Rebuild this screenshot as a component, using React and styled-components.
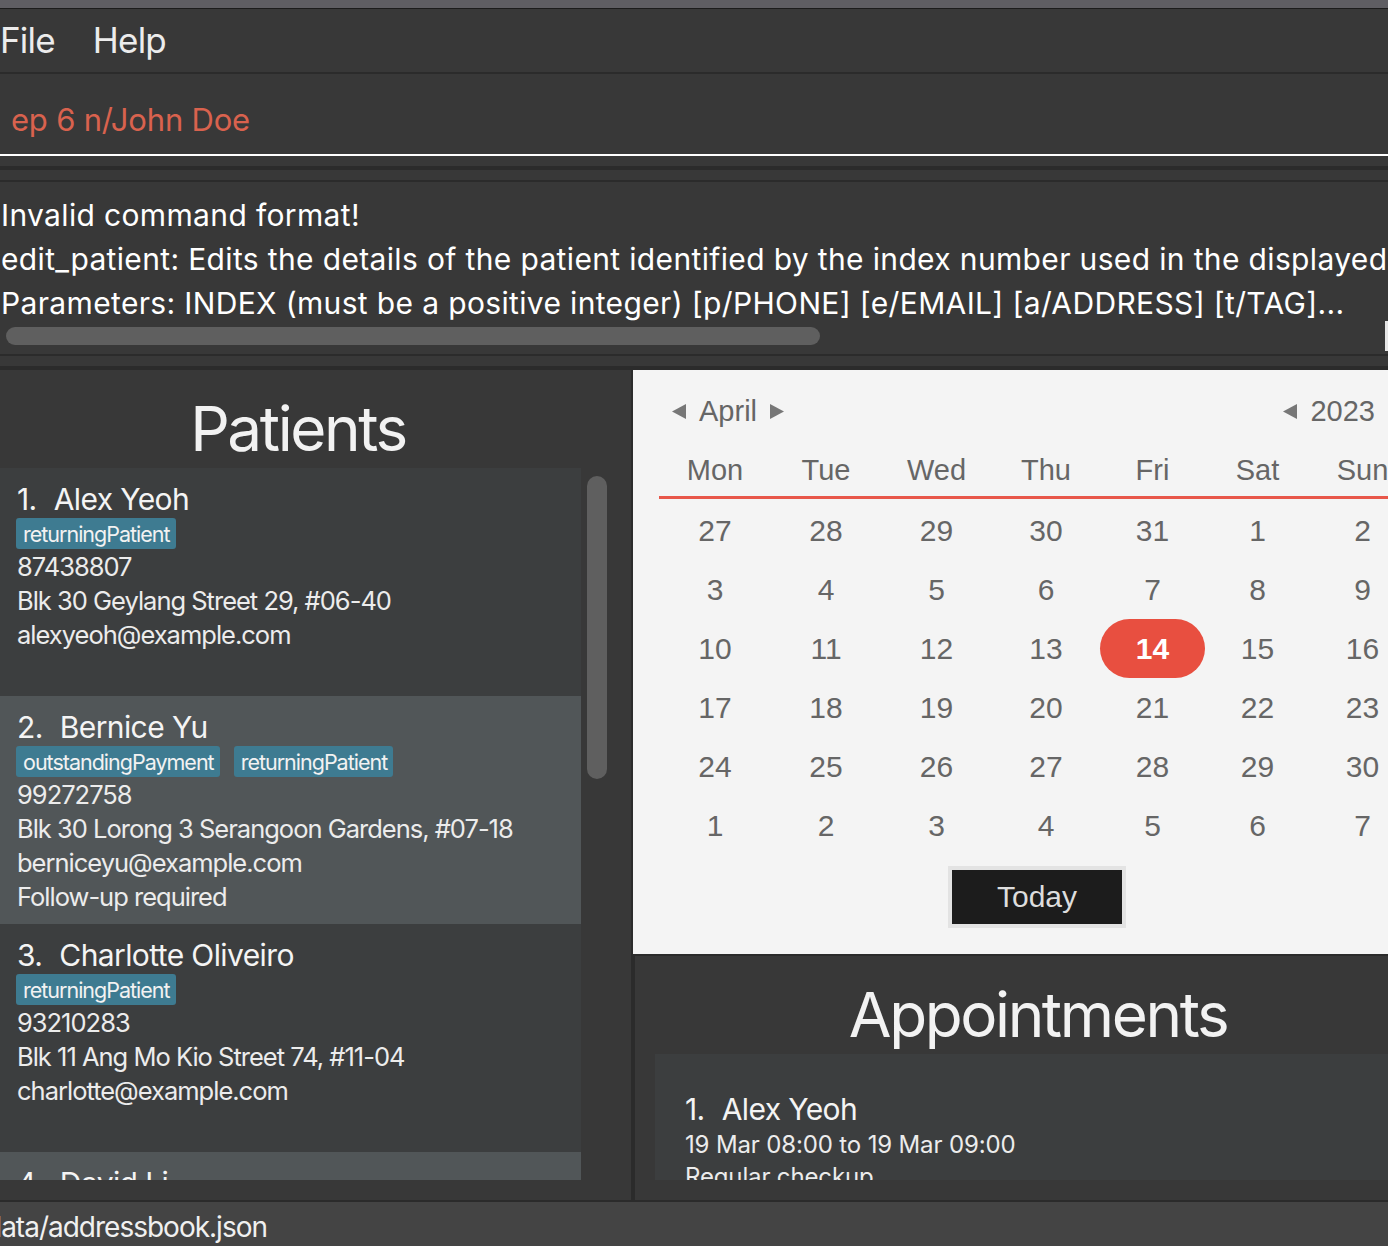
import React from "react";
import styled, { createGlobalStyle } from "styled-components";

const GlobalStyle = createGlobalStyle`
  html, body {
    margin: 0;
    padding: 0;
    background: #383838;
    overflow: hidden;
  }
  * {
    box-sizing: border-box;
  }
`;

const Window = styled.div`
  width: 1441px;
  height: 1246px;
  display: flex;
  flex-direction: column;
  background: #383838;
  font-family: "Inter", "Open Sans", sans-serif;
  color: #ffffff;
  overflow: hidden;
`;

const TitleStrip = styled.div`
  height: 9px;
  flex-shrink: 0;
  background: #5f5e63;
  border-bottom: 1px solid #1c1c1c;
`;

const MenuBar = styled.div`
  height: 65px;
  flex-shrink: 0;
  display: flex;
  align-items: center;
  gap: 38px;
  padding-bottom: 2px;
  border-bottom: 2px solid #2b2b2b;
`;

const MenuItem = styled.span`
  font-size: 35px;
  letter-spacing: -0.8px;
  color: #ececec;
`;

const CommandBox = styled.div`
  height: 82px;
  flex-shrink: 0;
  display: flex;
  align-items: center;
  padding: 10px 0 0 11px;
  border-bottom: 2px solid #ffffff;
`;

const CommandText = styled.span`
  font-size: 31px;
  letter-spacing: -0.2px;
  color: #d9624e;
`;

const PaneSplit = styled.div`
  height: 14px;
  flex-shrink: 0;
  border-bottom: 4px solid #2b2b2b;
`;

const ResultBox = styled.div`
  height: 176px;
  flex-shrink: 0;
  margin-top: 10px;
  border-top: 2px solid #2b2b2b;
  border-bottom: 2px solid #2b2b2b;
  padding: 11px 0 0 1px;
  display: flex;
  flex-direction: column;
  position: relative;
`;

const ResultLine = styled.div`
  font-size: 30px;
  line-height: 44px;
  letter-spacing: 0.35px;
  white-space: nowrap;
  color: #ffffff;
`;

const HScrollThumb = styled.div`
  width: 814px;
  height: 18px;
  margin: 2px 0 0 5px;
  border-radius: 9px;
  background: #5f5f5f;
`;

const VScrollPeek = styled.div`
  position: absolute;
  left: 1385px;
  top: 139px;
  width: 8px;
  height: 30px;
  background: #e6e6e6;
`;

const Main = styled.div`
  height: 830px;
  flex-shrink: 0;
  display: flex;
  overflow: hidden;
`;

const PatientPanel = styled.div`
  width: 631px;
  flex-shrink: 0;
  display: flex;
  flex-direction: column;
  padding-bottom: 20px;
`;

const PanelTitle = styled.div`
  height: 98px;
  flex-shrink: 0;
  padding: 22px ${(p) => p.pr || 0}px 0 0;
  text-align: center;
  font-size: 62px;
  line-height: 74px;
  font-weight: 400;
  letter-spacing: -2.4px;
  color: #f2f2f2;
`;

const ListWrap = styled.div`
  flex: 1;
  display: flex;
  min-height: 0;
`;

const CardList = styled.div`
  width: 581px;
  flex-shrink: 0;
  overflow: hidden;
`;

const Card = styled.div`
  height: 228px;
  padding: 13px 17px 0;
  background: ${(p) => (p.alt ? "#515658" : "#3c3e3f")};
`;

const CardName = styled.div`
  font-size: 30px;
  line-height: 36px;
  letter-spacing: -0.6px;
  color: #f4f4f4;
  display: flex;
  gap: 17px;
`;

const TagRow = styled.div`
  display: flex;
  gap: 14px;
  margin: 1px 0 1px -1px;
`;

const Tag = styled.span`
  height: 31px;
  display: inline-flex;
  align-items: center;
  padding: 0 6px 0 7px;
  border-radius: 3px;
  background: #3e7b91;
  font-size: 21.5px;
  letter-spacing: -1px;
  color: #f2f2f2;
`;

const Field = styled.div`
  font-size: 25.5px;
  line-height: 34px;
  letter-spacing: -1px;
  color: #ececec;
  white-space: nowrap;
`;

const VScrollTrack = styled.div`
  flex: 1;
  padding: 8px 0 0 6px;
`;

const VThumb = styled.div`
  width: 20px;
  height: 303px;
  border-radius: 10px;
  background: #5f5f5f;
`;

const Divider = styled.div`
  width: 2px;
  flex-shrink: 0;
  background: #2b2b2b;
`;

const RightColumn = styled.div`
  width: 808px;
  flex-shrink: 0;
  display: flex;
  flex-direction: column;
  min-height: 0;
`;

const Calendar = styled.div`
  height: 586px;
  flex-shrink: 0;
  background: #f4f4f4;
  border-bottom: 2px solid #2b2b2b;
  padding: 21px 26px 0;
  font-family: "Liberation Sans", Arial, sans-serif;
  color: #666666;
`;

const MonthHeader = styled.div`
  height: 40px;
  display: flex;
  align-items: center;
  justify-content: space-between;
  padding: 0 12px;
`;

const NavGroup = styled.div`
  display: flex;
  align-items: center;
  gap: 12px;
  font-size: 29px;
`;

const Arrow = ({ dir }) => (
  <svg width="16" height="17" viewBox="0 0 16 17">
    {dir === "left" ? (
      <polygon points="1,8.5 15,1 15,16" fill="#777777" />
    ) : (
      <polygon points="15,8.5 1,1 1,16" fill="#777777" />
    )}
  </svg>
);

const DayGrid = styled.div`
  display: grid;
  grid-template-columns: 112px 110px 111px 108px 105px 105px 105px;
`;

const DayName = styled.div`
  height: 68px;
  padding-top: 19px;
  line-height: 40px;
  text-align: center;
  font-size: 29px;
  border-bottom: 3px solid #e8574a;
`;

const DateCell = styled.div`
  height: 59px;
  display: flex;
  align-items: center;
  justify-content: center;
  font-size: 30px;
  margin-top: ${(p) => (p.first ? 2 : 0)}px;
  border-radius: 30px;
  background: ${(p) => (p.today ? "#e84f40" : "transparent")};
  color: ${(p) => (p.today ? "#ffffff" : "#666666")};
  font-weight: ${(p) => (p.today ? 700 : 400)};
`;

const TodayRow = styled.div`
  display: flex;
  justify-content: center;
  margin-top: 11px;
`;

const TodayButton = styled.div`
  width: 178px;
  height: 62px;
  border: 4px solid #e3e3e3;
  background: #1c1c1c;
  color: #dddddd;
  font-size: 30px;
  display: flex;
  align-items: center;
  justify-content: center;
`;

const AppointmentPanel = styled.div`
  flex: 1;
  min-height: 0;
  display: flex;
  flex-direction: column;
  border-left: 2px solid #2b2b2b;
  padding-bottom: 20px;
  overflow: hidden;
`;

const AppointmentCard = styled.div`
  flex: 1;
  min-height: 0;
  margin-left: 20px;
  padding: 37px 30px 0;
  background: #3c3e3f;
  overflow: hidden;
`;

const SubField = styled.div`
  font-size: 24px;
  line-height: 36px;
  letter-spacing: -0.15px;
  color: #ececec;
  white-space: nowrap;
  margin-top: ${(p) => p.mt || 0}px;
`;

const StatusBar = styled.div`
  flex: 1;
  background: #444444;
  border-top: 2px solid #2b2b2b;
  display: flex;
  align-items: center;
  padding-top: 6px;
`;

const StatusText = styled.span`
  margin-left: -15px;
  font-size: 28px;
  letter-spacing: -1px;
  color: #f0f0f0;
`;

const patients = [
  {
    name: "Alex Yeoh",
    tags: ["returningPatient"],
    phone: "87438807",
    address: "Blk 30 Geylang Street 29, #06-40",
    email: "alexyeoh@example.com",
  },
  {
    name: "Bernice Yu",
    tags: ["outstandingPayment", "returningPatient"],
    phone: "99272758",
    address: "Blk 30 Lorong 3 Serangoon Gardens, #07-18",
    email: "berniceyu@example.com",
    note: "Follow-up required",
  },
  {
    name: "Charlotte Oliveiro",
    tags: ["returningPatient"],
    phone: "93210283",
    address: "Blk 11 Ang Mo Kio Street 74, #11-04",
    email: "charlotte@example.com",
  },
  {
    name: "David Li",
    tags: ["family"],
    phone: "91031282",
    address: "Blk 436 Serangoon Gardens Street 26, #16-43",
    email: "lidavid@example.com",
  },
];

const days = ["Mon", "Tue", "Wed", "Thu", "Fri", "Sat", "Sun"];
const dates = [
  27, 28, 29, 30, 31, 1, 2, 3, 4, 5, 6, 7, 8, 9, 10, 11, 12, 13, 14, 15, 16,
  17, 18, 19, 20, 21, 22, 23, 24, 25, 26, 27, 28, 29, 30, 1, 2, 3, 4, 5, 6, 7,
];

export default function App() {
  return (
    <>
      <GlobalStyle />
      <Window>
        <TitleStrip />
        <MenuBar>
          <MenuItem>File</MenuItem>
          <MenuItem>Help</MenuItem>
        </MenuBar>
        <CommandBox>
          <CommandText>ep 6 n/John Doe</CommandText>
        </CommandBox>
        <PaneSplit />
        <ResultBox>
          <ResultLine>Invalid command format!</ResultLine>
          <ResultLine>
            edit_patient: Edits the details of the patient identified by the
            index number used in the displayed patient list.
          </ResultLine>
          <ResultLine>
            Parameters: INDEX (must be a positive integer) [p/PHONE] [e/EMAIL]
            [a/ADDRESS] [t/TAG]...
          </ResultLine>
          <HScrollThumb />
          <VScrollPeek />
        </ResultBox>
        <PaneSplit />
        <Main>
          <PatientPanel>
            <PanelTitle pr={35}>Patients</PanelTitle>
            <ListWrap>
              <CardList>
                {patients.map((p, i) => (
                  <Card key={p.name} alt={i % 2 === 1}>
                    <CardName>
                      <span>{i + 1}.</span>
                      <span>{p.name}</span>
                    </CardName>
                    <TagRow>
                      {p.tags.map((t) => (
                        <Tag key={t}>{t}</Tag>
                      ))}
                    </TagRow>
                    <Field>{p.phone}</Field>
                    <Field>{p.address}</Field>
                    <Field>{p.email}</Field>
                    {p.note && <Field>{p.note}</Field>}
                  </Card>
                ))}
              </CardList>
              <VScrollTrack>
                <VThumb />
              </VScrollTrack>
            </ListWrap>
          </PatientPanel>
          <Divider />
          <RightColumn>
            <Calendar>
              <MonthHeader>
                <NavGroup>
                  <Arrow dir="left" />
                  <span>April</span>
                  <Arrow dir="right" />
                </NavGroup>
                <NavGroup>
                  <Arrow dir="left" />
                  <span>2023</span>
                  <Arrow dir="right" />
                </NavGroup>
              </MonthHeader>
              <DayGrid>
                {days.map((d) => (
                  <DayName key={d}>{d}</DayName>
                ))}
                {dates.map((d, i) => (
                  <DateCell key={i} first={i < 7} today={i === 18}>
                    {d}
                  </DateCell>
                ))}
              </DayGrid>
              <TodayRow>
                <TodayButton>Today</TodayButton>
              </TodayRow>
            </Calendar>
            <AppointmentPanel>
              <PanelTitle>Appointments</PanelTitle>
              <AppointmentCard>
                <CardName>
                  <span>1.</span>
                  <span>Alex Yeoh</span>
                </CardName>
                <SubField>19 Mar 08:00 to 19 Mar 09:00</SubField>
                <SubField mt={-4}>Regular checkup</SubField>
              </AppointmentCard>
            </AppointmentPanel>
          </RightColumn>
        </Main>
        <StatusBar>
          <StatusText>data/addressbook.json</StatusText>
        </StatusBar>
      </Window>
    </>
  );
}
